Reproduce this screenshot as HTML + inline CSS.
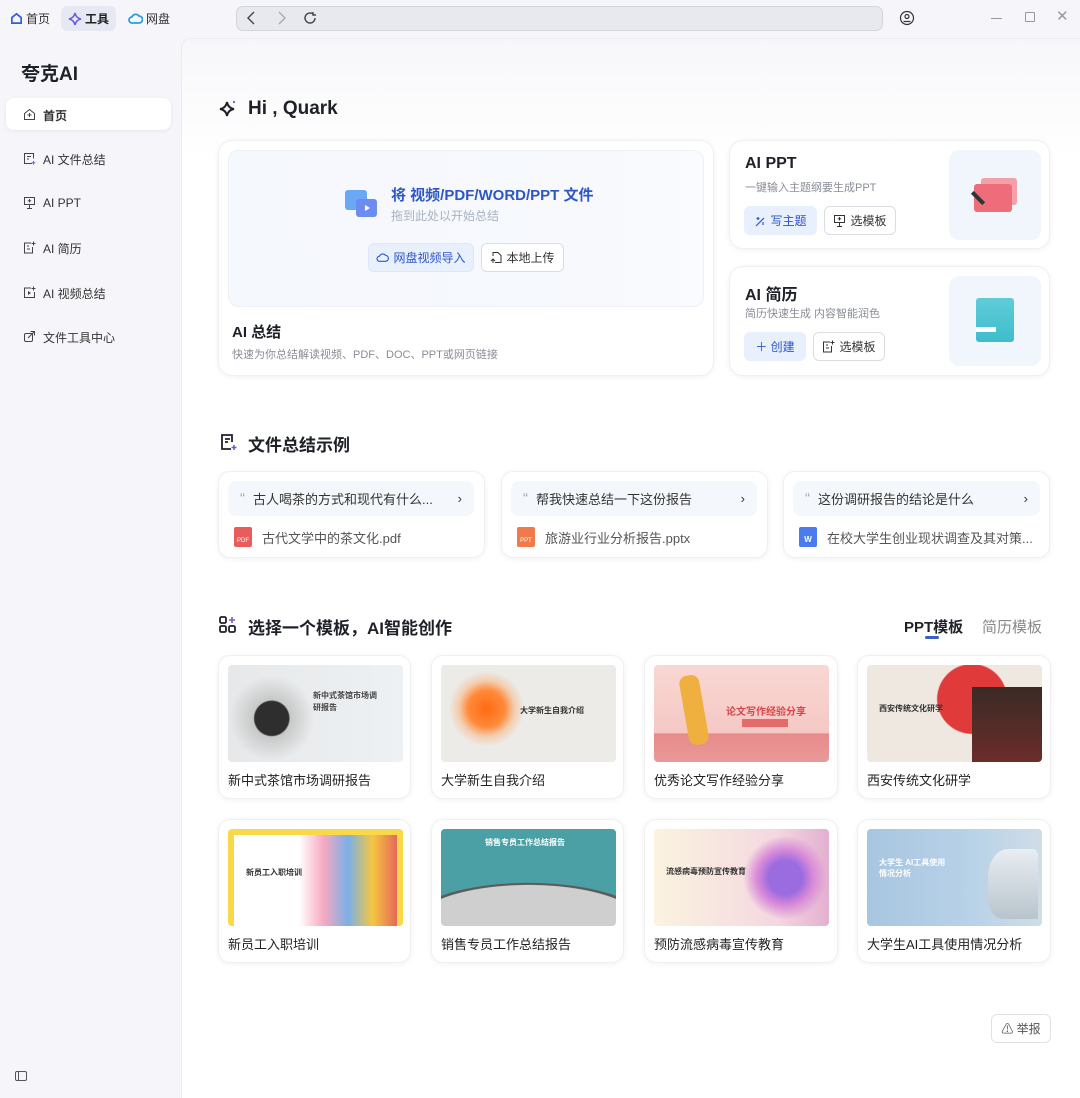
<!DOCTYPE html>
<html><head><meta charset="utf-8"><style>
*{box-sizing:border-box;margin:0;padding:0}
body{width:1080px;height:1098px;overflow:hidden;background:#f6f6fa;font-family:"Liberation Sans","Noto Sans CJK SC",sans-serif;color:#1f2129;position:relative}
.a{position:absolute}
.tab{font-size:12px;color:#333;display:flex;align-items:center;gap:3px}
.side{font-size:12px;color:#333}
.main{left:181px;top:38px;width:899px;height:1060px;background:linear-gradient(#f7f7fa,#fff 120px);border-left:1px solid #ebebf0;border-top:1px solid #ebebf0;border-top-left-radius:10px}
.card{background:#fff;border-radius:14px;box-shadow:0 1px 6px rgba(0,0,0,.06);border:1px solid #f0f0f3}
.h2{font-size:17px;font-weight:bold;color:#1f2129}
.btn{height:29px;border-radius:6px;font-size:12px;display:flex;align-items:center;justify-content:center;gap:4px}
.pb{background:#e9f0fd;color:#2c55c8}
.wb{background:#fff;border:1px solid #dcdde2;color:#333}
.q{background:#f4f7fb;border-radius:8px;font-size:13px;color:#333;display:flex;align-items:center;padding:0 12px}
.th{border-radius:4px;overflow:hidden}
.lbl{font-size:13px;color:#222}
.si{position:absolute;left:23px}
</style></head><body>
<!-- top bar -->
<div class="a tab" style="left:10px;top:10px"><svg width="13" height="13" viewBox="0 0 14 14"><path d="M2 6L7 2l5 4v6H2z" fill="none" stroke="#2a62d6" stroke-width="1.8"/></svg>首页</div>
<div class="a" style="left:61px;top:6px;width:55px;height:25px;background:#e6e8f3;border-radius:6px"></div>
<div class="a tab" style="left:68px;top:10px;font-weight:bold;color:#222"><svg width="14" height="14" viewBox="0 0 14 14"><path d="M7 1Q8 6 13 7Q8 8 7 13Q6 8 1 7Q6 6 7 1z" fill="none" stroke="#6b5ae0" stroke-width="1.6"/></svg>工具</div>
<div class="a tab" style="left:128px;top:10px"><svg width="15" height="13" viewBox="0 0 15 13"><path d="M4 11a3 3 0 010-6 4 4 0 017-1 3 3 0 010 7z" fill="none" stroke="#2aa0d8" stroke-width="1.8"/></svg>网盘</div>
<div class="a" style="left:236px;top:6px;width:647px;height:25px;background:#e8e8ef;border:1px solid #d4d4dc;border-radius:7px"></div>
<svg class="a" style="left:246px;top:11px" width="10" height="14" viewBox="0 0 10 14"><path d="M8 1L2 7l6 6" fill="none" stroke="#444" stroke-width="1.4"/></svg>
<svg class="a" style="left:277px;top:11px" width="10" height="14" viewBox="0 0 10 14"><path d="M2 1l6 6-6 6" fill="none" stroke="#aaa" stroke-width="1.4"/></svg>
<svg class="a" style="left:303px;top:11px" width="14" height="14" viewBox="0 0 14 14"><path d="M12 7a5 5 0 11-2-4M10 1v3h3" fill="none" stroke="#444" stroke-width="1.4"/></svg>
<svg class="a" style="left:899px;top:10px" width="16" height="16" viewBox="0 0 16 16"><circle cx="8" cy="8" r="6.5" fill="none" stroke="#333" stroke-width="1.2"/><circle cx="8" cy="6.5" r="2" fill="none" stroke="#333" stroke-width="1.2"/><path d="M4.5 11.5h7" stroke="#333" stroke-width="1.2"/></svg>
<div class="a" style="left:991px;top:18px;width:11px;height:1px;background:#999"></div>
<div class="a" style="left:1025px;top:12px;width:10px;height:10px;border:1px solid #999;border-radius:1px"></div>
<div class="a" style="left:1056px;top:7px;font-size:15px;color:#999">✕</div>
<!-- sidebar -->
<div class="a" style="left:21px;top:59px;font-size:19px;font-weight:bold">夸克AI</div>
<div class="a" style="left:6px;top:98px;width:165px;height:32px;background:#fff;border-radius:8px;box-shadow:0 1px 4px rgba(0,0,0,.07)"></div>
<svg class="si" style="top:108px" width="13" height="13" viewBox="0 0 13 13"><path d="M1.5 5.5L6.5 1.5l5 4v6h-10z" fill="none" stroke="#444" stroke-width="1"/><path d="M6.5 5v4M4.5 7h4" stroke="#444"/></svg>
<div class="a side" style="left:43px;top:107px;font-weight:bold">首页</div>
<svg class="si" style="top:152px" width="13" height="13" viewBox="0 0 13 13"><path d="M9 11.5H1.5v-10h9v5M4 4.5h4M4 7h2" fill="none" stroke="#444"/><path d="M10.5 9v3.5M8.7 10.8h3.6" stroke="#6b5ae0"/></svg>
<div class="a side" style="left:43px;top:151px">AI 文件总结</div>
<svg class="si" style="top:196px" width="13" height="13" viewBox="0 0 13 13"><path d="M1.5 1.5h10v7h-10zM6.5 8.5v4M4 12.5h5M6.5 3v3.5M4.8 4.7h3.4" fill="none" stroke="#444"/></svg>
<div class="a side" style="left:43px;top:196px">AI PPT</div>
<svg class="si" style="top:241px" width="13" height="13" viewBox="0 0 13 13"><path d="M8 2H1.5v10h8V6M4 5h2M4 8h3" fill="none" stroke="#444"/><path d="M10.5 0.5v4M8.5 2.5h4" stroke="#444"/></svg>
<div class="a side" style="left:43px;top:240px">AI 简历</div>
<svg class="si" style="top:286px" width="13" height="13" viewBox="0 0 13 13"><path d="M8 2H1.5v9.5h10V6" fill="none" stroke="#444"/><path d="M5 5v4l3-2z" fill="#444"/><path d="M10.5 0.5v4M8.5 2.5h4" stroke="#444"/></svg>
<div class="a side" style="left:43px;top:285px">AI 视频总结</div>
<svg class="si" style="top:330px" width="13" height="13" viewBox="0 0 13 13"><rect x="1.5" y="3.5" width="8" height="8" rx="1.5" fill="none" stroke="#444"/><path d="M5 8l6-6M7.5 1.5h4v4" fill="none" stroke="#444"/></svg>
<div class="a side" style="left:43px;top:329px">文件工具中心</div>
<div class="a" style="left:15px;top:1071px;width:12px;height:10px;border:1px solid #555;border-radius:2px"></div>
<div class="a" style="left:18px;top:1071px;width:1px;height:10px;background:#555"></div>
<!-- main -->
<div class="a main"></div>
<svg class="a" style="left:218px;top:99px" width="20" height="20" viewBox="0 0 20 20"><path d="M9 3Q10 9 16 10Q10 11 9 17Q8 11 2 10Q8 9 9 3z" fill="none" stroke="#1f2129" stroke-width="2"/><circle cx="16" cy="3" r="1.2" fill="#7b6be6"/></svg>
<div class="a" style="left:248px;top:98px;font-size:19px;font-weight:bold">Hi , Quark</div>

<div class="a card" style="left:218px;top:140px;width:496px;height:236px"></div>
<div class="a" style="left:228px;top:150px;width:476px;height:157px;background:linear-gradient(90deg,#f5f8fd,#f7f9fd 80%,#fafbfe);border-radius:10px;border:1px solid #eef1f6"></div>
<div class="a" style="left:345px;top:190px;width:22px;height:20px;background:#6aa8f5;border-radius:3px"></div>
<div class="a" style="left:356px;top:199px;width:21px;height:18px;background:#6d8cf0;border-radius:3px"></div>
<div class="a" style="left:365px;top:205px;width:0;height:0;border-left:5px solid #fff;border-top:3.5px solid transparent;border-bottom:3.5px solid transparent"></div>
<div class="a" style="left:391px;top:184px;font-size:15px;font-weight:bold;color:#2e56c4">将 视频/PDF/WORD/PPT 文件</div>
<div class="a" style="left:391px;top:207px;font-size:12px;color:#a8b2c4">拖到此处以开始总结</div>
<div class="a btn pb" style="left:368px;top:243px;width:106px;border:1px solid #dfe6f4"><svg width="13" height="11" viewBox="0 0 15 13"><path d="M4 11a3 3 0 010-6 4 4 0 017-1 3 3 0 010 7z" fill="none" stroke="#2c55c8" stroke-width="1.3"/></svg>网盘视频导入</div>
<div class="a btn wb" style="left:481px;top:243px;width:83px"><svg width="12" height="13" viewBox="0 0 12 13"><path d="M3 5V1.5h5l3 3v7H5M1 10l2-2 2 2M3 8v4" fill="none" stroke="#333"/></svg>本地上传</div>
<div class="a" style="left:232px;top:321px;font-size:15px;font-weight:bold">AI 总结</div>
<div class="a" style="left:232px;top:346px;font-size:11px;color:#8a8d96">快速为你总结解读视频、PDF、DOC、PPT或网页链接</div>

<div class="a card" style="left:729px;top:140px;width:321px;height:109px"></div>
<div class="a" style="left:745px;top:155px;font-size:16px;font-weight:bold">AI PPT</div>
<div class="a" style="left:745px;top:179px;font-size:11px;color:#8a8d96">一键输入主题纲要生成PPT</div>
<div class="a btn pb" style="left:744px;top:206px;width:73px"><svg width="12" height="12" viewBox="0 0 12 12"><path d="M2 11L10 3M4 2v3M2.5 3.5h3M9 7v3" fill="none" stroke="#2c55c8" stroke-width="1.2"/></svg>写主题</div>
<div class="a btn wb" style="left:824px;top:206px;width:72px"><svg width="13" height="13" viewBox="0 0 13 13"><path d="M1.5 1.5h10v7h-10zM6.5 8.5v4M4 12.5h5M6.5 3v3.5M4.8 4.7h3.4" fill="none" stroke="#333"/></svg>选模板</div>
<div class="a" style="left:949px;top:150px;width:92px;height:90px;background:#f1f6fc;border-radius:10px"></div>
<div class="a" style="left:981px;top:178px;width:36px;height:27px;background:#f4a0a8;border-radius:3px"></div>
<div class="a" style="left:974px;top:184px;width:38px;height:28px;background:#ef6c7a;border-radius:3px"></div>
<div class="a" style="left:970px;top:196px;width:16px;height:4px;background:#333;transform:rotate(45deg)"></div>

<div class="a card" style="left:729px;top:266px;width:321px;height:110px"></div>
<div class="a" style="left:745px;top:281px;font-size:16px;font-weight:bold">AI 简历</div>
<div class="a" style="left:745px;top:305px;font-size:11px;color:#8a8d96">简历快速生成 内容智能润色</div>
<div class="a btn pb" style="left:744px;top:332px;width:62px">＋ 创建</div>
<div class="a btn wb" style="left:813px;top:332px;width:72px"><svg width="13" height="13" viewBox="0 0 13 13"><path d="M8 2H1.5v10h8V6M4 5h2M4 8h3" fill="none" stroke="#333"/><path d="M10.5 0.5v4M8.5 2.5h4" stroke="#333"/></svg>选模板</div>
<div class="a" style="left:949px;top:276px;width:92px;height:90px;background:#f1f6fc;border-radius:10px"></div>
<div class="a" style="left:976px;top:298px;width:38px;height:44px;background:linear-gradient(#5fcdd8,#3fbccc);border-radius:3px"></div>
<div class="a" style="left:976px;top:327px;width:20px;height:5px;background:#fff"></div>

<!-- examples -->
<svg class="a" style="left:218px;top:432px" width="20" height="20" viewBox="0 0 20 20"><path d="M13 17H4V3h10v7M7 7h5M7 10h3" fill="none" stroke="#1f2129" stroke-width="1.8"/><path d="M16 13v5M13.5 15.5h5" stroke="#6b5ae0" stroke-width="1.6"/></svg>
<div class="a h2" style="left:248px;top:431px">文件总结示例</div>
<div class="a card" style="left:218px;top:471px;width:267px;height:87px;border-radius:12px"></div>
<div class="a q" style="left:228px;top:481px;width:246px;height:35px"><span style="color:#aab;font-size:15px;margin-right:8px">“</span>古人喝茶的方式和现代有什么...<span style="margin-left:auto">›</span></div>
<div class="a" style="left:234px;top:527px;width:18px;height:20px;background:#ea5b5b;border-radius:2px;color:#fff;font-size:6px;padding-top:11px;text-align:center">PDF</div>
<div class="a" style="left:262px;top:528px;font-size:13px;color:#555">古代文学中的茶文化.pdf</div>

<div class="a card" style="left:501px;top:471px;width:267px;height:87px;border-radius:12px"></div>
<div class="a q" style="left:511px;top:481px;width:246px;height:35px"><span style="color:#aab;font-size:15px;margin-right:8px">“</span>帮我快速总结一下这份报告<span style="margin-left:auto">›</span></div>
<div class="a" style="left:517px;top:527px;width:18px;height:20px;background:#f07a4a;border-radius:2px;color:#fff;font-size:6px;padding-top:11px;text-align:center">PPT</div>
<div class="a" style="left:545px;top:528px;font-size:13px;color:#555">旅游业行业分析报告.pptx</div>

<div class="a card" style="left:783px;top:471px;width:267px;height:87px;border-radius:12px"></div>
<div class="a q" style="left:793px;top:481px;width:247px;height:35px"><span style="color:#aab;font-size:15px;margin-right:8px">“</span>这份调研报告的结论是什么<span style="margin-left:auto">›</span></div>
<div class="a" style="left:799px;top:527px;width:18px;height:20px;background:#4a7cf0;border-radius:2px;color:#fff;font-size:8px;padding-top:8px;text-align:center;font-weight:bold">W</div>
<div class="a" style="left:827px;top:528px;font-size:13px;color:#555">在校大学生创业现状调查及其对策...</div>

<!-- templates -->
<svg class="a" style="left:218px;top:615px" width="20" height="20" viewBox="0 0 20 20"><rect x="2" y="2" width="6" height="6" rx="1.5" fill="none" stroke="#1f2129" stroke-width="1.8"/><rect x="2" y="11" width="6" height="6" rx="1.5" fill="none" stroke="#1f2129" stroke-width="1.8"/><rect x="11" y="11" width="6" height="6" rx="1.5" fill="none" stroke="#1f2129" stroke-width="1.8"/><path d="M14 2v6M11 5h6" stroke="#6b5ae0" stroke-width="1.6"/></svg>
<div class="a h2" style="left:248px;top:614px">选择一个模板，AI智能创作</div>
<div class="a" style="left:904px;top:616px;font-size:15px;font-weight:bold;color:#1f2129">PPT模板</div>
<div class="a" style="left:925px;top:636px;width:14px;height:3px;background:#3b5fc8;border-radius:2px"></div>
<div class="a" style="left:982px;top:616px;font-size:15px;color:#888">简历模板</div>

<div class="a card" style="left:218px;top:655px;width:193px;height:144px;border-radius:12px"></div>
<div class="a th" style="left:228px;top:665px;width:175px;height:97px;background:radial-gradient(circle at 25% 55%,#2e2e2e 0 12%,#c8c8c8 13%,transparent 30%),linear-gradient(90deg,#e6e8ea,#eef1f3)"><div style="position:absolute;left:85px;top:25px;font-size:8px;font-weight:bold;color:#444;line-height:12px">新中式茶馆市场调<br>研报告</div></div>
<div class="a lbl" style="left:228px;top:770px">新中式茶馆市场调研报告</div>

<div class="a card" style="left:431px;top:655px;width:193px;height:144px;border-radius:12px"></div>
<div class="a th" style="left:441px;top:665px;width:175px;height:97px;background:radial-gradient(circle at 26% 45%,#ff6a10 0,#ff8a3a 13%,rgba(255,160,90,.4) 20%,transparent 27%),#ecebe8"><div style="position:absolute;left:79px;top:40px;font-size:8px;font-weight:bold;color:#333">大学新生自我介绍</div></div>
<div class="a lbl" style="left:441px;top:770px">大学新生自我介绍</div>

<div class="a card" style="left:644px;top:655px;width:194px;height:144px;border-radius:12px"></div>
<div class="a th" style="left:654px;top:665px;width:175px;height:97px;background:linear-gradient(#f9d7d3,#f5c8c4 70%,#e88a8a 71%,#e9999a)"><div style="position:absolute;left:30px;top:10px;width:20px;height:70px;background:#f0b040;border-radius:8px;transform:rotate(-10deg)"></div><div style="position:absolute;left:72px;top:38px;font-size:10px;font-weight:bold;color:#d8444a">论文写作经验分享</div><div style="position:absolute;left:88px;top:54px;width:46px;height:8px;background:#e46b6b"></div></div>
<div class="a lbl" style="left:654px;top:770px">优秀论文写作经验分享</div>

<div class="a card" style="left:857px;top:655px;width:194px;height:144px;border-radius:12px"></div>
<div class="a th" style="left:867px;top:665px;width:175px;height:97px;background:radial-gradient(circle at 60% 35%,#e03a3a 0 28%,transparent 29%),#efe8e0"><div style="position:absolute;right:0;top:22px;width:70px;height:75px;background:linear-gradient(#3a2a25,#6b2d2a)"></div><div style="position:absolute;left:12px;top:38px;font-size:8px;font-weight:bold;color:#333">西安传统文化研学</div></div>
<div class="a lbl" style="left:867px;top:770px">西安传统文化研学</div>

<div class="a card" style="left:218px;top:819px;width:193px;height:144px;border-radius:12px"></div>
<div class="a th" style="left:228px;top:829px;width:175px;height:97px;background:linear-gradient(90deg,#fff 0 40%,#f7a8c0 55%,#7ab0e8 70%,#f5c640 85%,#e6685a);border:6px solid #f9d849;border-bottom:none"><div style="position:absolute;left:12px;top:32px;font-size:8px;font-weight:bold;color:#333">新员工入职培训</div></div>
<div class="a lbl" style="left:228px;top:934px">新员工入职培训</div>

<div class="a card" style="left:431px;top:819px;width:193px;height:144px;border-radius:12px"></div>
<div class="a th" style="left:441px;top:829px;width:175px;height:97px;background:radial-gradient(ellipse 110% 70% at 50% 100%,#cfcfd0 0 60%,#5a5a5a 61% 63%,transparent 64%),#4aa0a4"><div style="position:absolute;left:44px;top:8px;font-size:8px;font-weight:bold;color:#fff">销售专员工作总结报告</div></div>
<div class="a lbl" style="left:441px;top:934px">销售专员工作总结报告</div>

<div class="a card" style="left:644px;top:819px;width:194px;height:144px;border-radius:12px"></div>
<div class="a th" style="left:654px;top:829px;width:175px;height:97px;background:radial-gradient(circle at 75% 50%,#9b6be0 0 12%,#d88ad8 20%,transparent 30%),linear-gradient(90deg,#fbf3e0,#f4d8e0 70%,#e3b0d0)"><div style="position:absolute;left:12px;top:37px;font-size:8px;font-weight:bold;color:#333">流感病毒预防宣传教育</div></div>
<div class="a lbl" style="left:654px;top:934px">预防流感病毒宣传教育</div>

<div class="a card" style="left:857px;top:819px;width:194px;height:144px;border-radius:12px"></div>
<div class="a th" style="left:867px;top:829px;width:175px;height:97px;background:linear-gradient(90deg,#a8c6e0,#b8d2e8 60%,#d0dde8)"><div style="position:absolute;left:12px;top:28px;font-size:8px;font-weight:bold;color:#fff;line-height:11px">大学生 AI工具使用<br>情况分析</div><div style="position:absolute;right:4px;top:20px;width:50px;height:70px;background:linear-gradient(#e8eef2,#b8c4cc);border-radius:40% 10% 0 30%"></div></div>
<div class="a lbl" style="left:867px;top:934px">大学生AI工具使用情况分析</div>

<div class="a btn wb" style="left:991px;top:1014px;width:60px;height:29px;border-color:#e2e2e6;color:#555">⚠ 举报</div>
</body></html>
